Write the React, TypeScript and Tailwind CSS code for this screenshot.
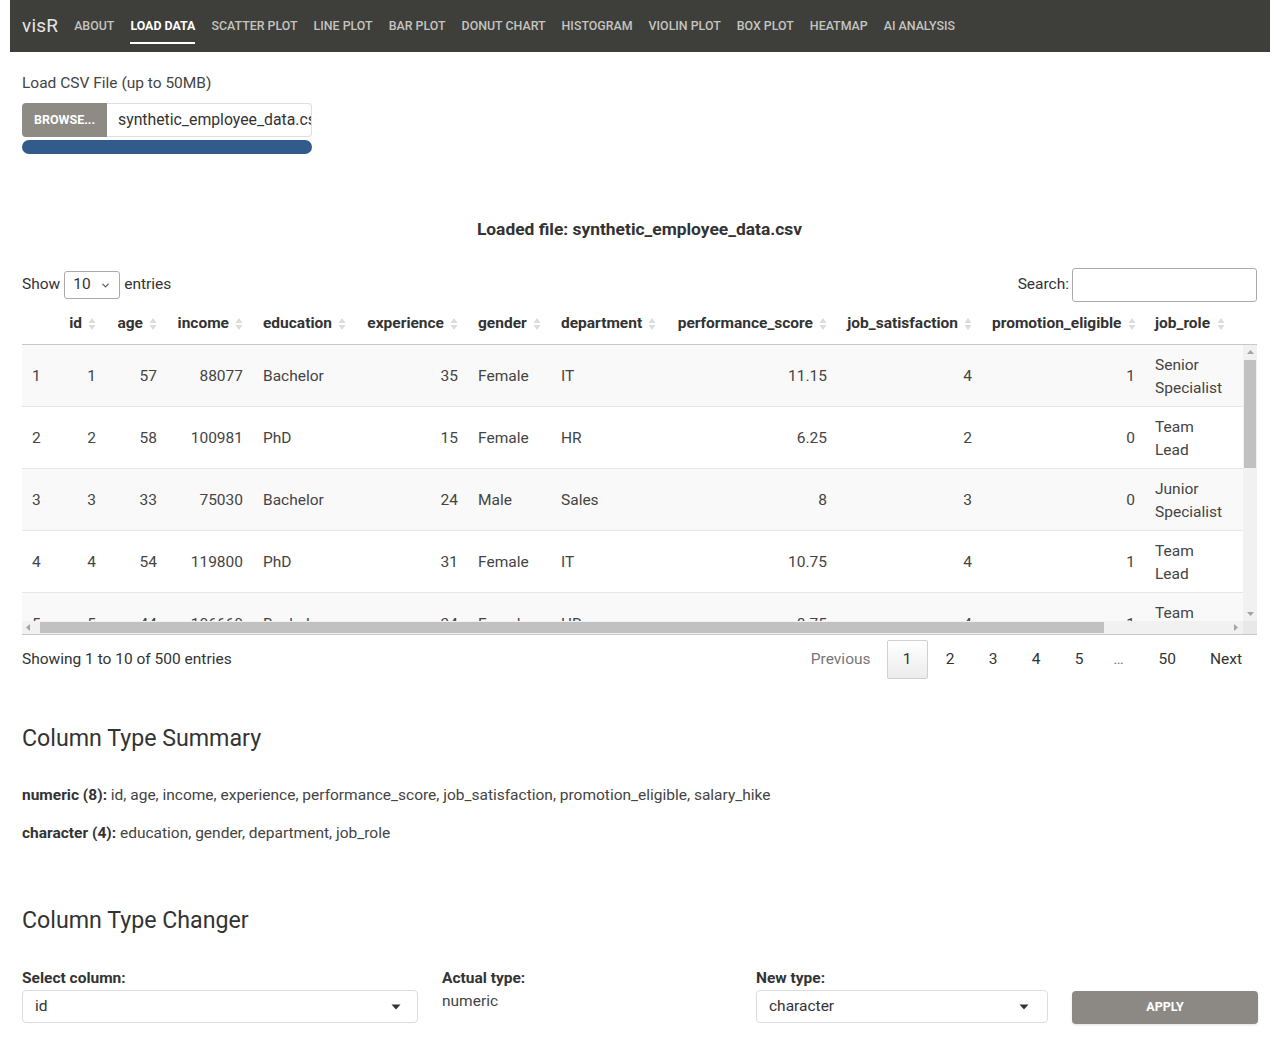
import { ChevronDown } from 'lucide-react'

type Col = { key: string; w: number; right: boolean; sort: boolean }

const cols: Col[] = [
  { key: '', w: 36, right: false, sort: false },
  { key: 'id', w: 48, right: true, sort: true },
  { key: 'age', w: 61, right: true, sort: true },
  { key: 'income', w: 86, right: true, sort: true },
  { key: 'education', w: 103, right: false, sort: true },
  { key: 'experience', w: 112, right: true, sort: true },
  { key: 'gender', w: 83, right: false, sort: true },
  { key: 'department', w: 115, right: false, sort: true },
  { key: 'performance_score', w: 171, right: true, sort: true },
  { key: 'job_satisfaction', w: 145, right: true, sort: true },
  { key: 'promotion_eligible', w: 163, right: true, sort: true },
  { key: 'job_role', w: 90, right: false, sort: true },
  { key: 'salary_hike', w: 134, right: true, sort: true },
]

const rows: (string | number)[][] = [
  [1, 1, 57, 88077, 'Bachelor', 35, 'Female', 'IT', '11.15', 4, 1, 'Senior Specialist', '12.4'],
  [2, 2, 58, 100981, 'PhD', 15, 'Female', 'HR', '6.25', 2, 0, 'Team Lead', '8.1'],
  [3, 3, 33, 75030, 'Bachelor', 24, 'Male', 'Sales', '8', 3, 0, 'Junior Specialist', '10.2'],
  [4, 4, 54, 119800, 'PhD', 31, 'Female', 'IT', '10.75', 4, 1, 'Team Lead', '14.9'],
  [5, 5, 44, 106660, 'Bachelor', 34, 'Female', 'HR', '8.75', 4, 1, 'Team Lead', '11.3'],
  [6, 6, 39, 92410, 'Master', 12, 'Male', 'Finance', '7.5', 3, 0, 'Analyst', '9.6'],
]

const tabs = ['About', 'Load Data', 'Scatter Plot', 'Line Plot', 'Bar Plot', 'Donut Chart', 'Histogram', 'Violin Plot', 'Box Plot', 'Heatmap', 'AI Analysis']

const tableW = cols.reduce((s, c) => s + c.w, 0)

function SortIcon() {
  return (
    <svg width="8" height="14" viewBox="0 0 8 14" className="shrink-0">
      <path d="M4 1 L7.5 6 H0.5 Z" fill="#dcdcdc" />
      <path d="M4 13 L0.5 8 H7.5 Z" fill="#dcdcdc" />
    </svg>
  )
}

function Caret() {
  return (
    <svg width="10" height="6" viewBox="0 0 10 6">
      <path d="M0.5 0.5 H9.5 L5 5.5 Z" fill="#333" />
    </svg>
  )
}

function ColGroup() {
  return (
    <colgroup>
      {cols.map((c, i) => (
        <col key={i} style={{ width: c.w }} />
      ))}
    </colgroup>
  )
}

function DataTable() {
  return (
    <div className="w-full">
      {/* header */}
      <div className="overflow-hidden border-b border-[#c8c8c8]">
        <table className="table-fixed border-collapse" style={{ width: tableW }}>
          <ColGroup />
          <thead>
            <tr>
              {cols.map((c, i) => (
                <th key={i} className="h-[42px] pt-[2px] pl-[10px] pr-[10px] font-bold text-[15.5px] text-[#333] whitespace-nowrap">
                  {c.sort && (
                    <div className="flex items-center gap-[6px]">
                      <span className={`flex-1 ${c.right ? 'text-right' : 'text-left'}`}>{c.key}</span>
                      <SortIcon />
                    </div>
                  )}
                </th>
              ))}
            </tr>
          </thead>
        </table>
      </div>

      {/* body + vertical scrollbar */}
      <div className="flex h-[276px]">
        <div className="flex-1 overflow-hidden">
          <table className="table-fixed border-collapse" style={{ width: tableW }}>
            <ColGroup />
            <tbody>
              {rows.map((r, ri) => (
                <tr key={ri} className={`${ri % 2 === 0 ? 'bg-[#f9f9f9]' : 'bg-white'} ${ri > 0 ? 'border-t border-[#e6e6e6]' : ''}`}>
                  {r.map((v, ci) => (
                    <td
                      key={ci}
                      className={`pt-[9px] pb-[7px] px-[10px] text-[15.5px] leading-[22.5px] text-[#444] align-middle ${cols[ci].right && ci > 0 ? 'text-right' : 'text-left'}`}
                    >
                      {v}
                    </td>
                  ))}
                </tr>
              ))}
            </tbody>
          </table>
        </div>
        <div className="w-[14px] bg-[#f1f1f1] flex flex-col items-center">
          <svg width="7" height="4" viewBox="0 0 7 4" className="mt-[5px]">
            <path d="M3.5 0 L7 4 H0 Z" fill="#a3a3a3" />
          </svg>
          <div className="w-[12px] h-[108px] bg-[#c1c1c1] mt-[6px]" />
          <div className="flex-1" />
          <svg width="7" height="4" viewBox="0 0 7 4" className="mb-[5px]">
            <path d="M3.5 4 L7 0 H0 Z" fill="#a3a3a3" />
          </svg>
        </div>
      </div>

      {/* horizontal scrollbar */}
      <div className="flex h-[14px] border-b border-[#c8c8c8]">
        <div className="flex-1 bg-[#f1f1f1] flex items-center">
          <svg width="4" height="7" viewBox="0 0 4 7" className="ml-[4px]">
            <path d="M0 3.5 L4 0 V7 Z" fill="#a3a3a3" />
          </svg>
          <div className="ml-[10px] w-[1064px] h-[11px] bg-[#c1c1c1]" />
          <div className="flex-1" />
          <svg width="4" height="7" viewBox="0 0 4 7" className="mr-[5px]">
            <path d="M4 3.5 L0 0 V7 Z" fill="#a3a3a3" />
          </svg>
        </div>
        <div className="w-[14px] bg-[#e8e8e8]" />
      </div>
    </div>
  )
}

function Pagination() {
  const btn = 'px-[14px] h-[39px] flex items-center justify-center text-[15.5px] text-[#333]'
  return (
    <div className="flex items-center">
      <span className={`${btn} text-[#777]`}>Previous</span>
      <span className={`${btn} min-w-[41px] ml-[2px] border border-[#d0d0d0] rounded-[2px] bg-gradient-to-b from-white to-[#ececec]`}>1</span>
      {['2', '3', '4', '5'].map((n) => (
        <span key={n} className={`${btn} min-w-[41px] ml-[2px]`}>
          {n}
        </span>
      ))}
      <span className="w-[34px] ml-[2px] text-center text-[15.5px] text-[#777]">…</span>
      <span className={`${btn} ml-[9px]`}>50</span>
      <span className={`${btn} ml-[6px] pr-[15px]`}>Next</span>
    </div>
  )
}

export default function App() {
  return (
    <div className="min-h-[1042px] bg-white text-[#3a3a3a]" style={{ fontFamily: 'Roboto, "Liberation Sans", sans-serif' }}>
      {/* navbar */}
      <nav className="mx-[10px] h-[52px] bg-[#3e3e3a] flex items-center pl-[12px] gap-4">
        <span className="text-[19px] text-[#e6e6e6] tracking-[0.2px]">visR</span>
        {tabs.map((t) => {
          const active = t === 'Load Data'
          return (
            <div key={t} className="relative h-[52px] flex items-center">
              <span className={`uppercase text-[12.4px] whitespace-nowrap ${active ? 'font-bold text-white' : 'font-medium text-[#c4c4c0]'}`}>{t}</span>
              {active && <div className="absolute left-0 right-0 top-[42px] h-[2px] bg-white" />}
            </div>
          )
        })}
      </nav>

      <div className="pl-[22px] pr-[23px]">
        {/* file input */}
        <div className="mt-[20px] text-[15.5px] leading-[22px] text-[#444]">Load CSV File (up to 50MB)</div>
        <div className="mt-[9px] w-[290px] flex h-[34px]">
          <div className="w-[85px] bg-[#8e8a84] rounded-l-[4px] flex items-center justify-center text-white text-[12.5px] font-bold">BROWSE...</div>
          <div className="flex-1 border border-l-0 border-[#dedede] rounded-r-[4px] flex items-center pl-[11px] overflow-hidden whitespace-nowrap text-[15.8px] text-[#333]">
            synthetic_employee_data.csv
          </div>
        </div>
        <div className="mt-[3px] w-[290px] h-[14px] rounded-full bg-[#305b8a]" />

        <div className="mt-[63px] text-center font-bold text-[17.4px] leading-[24px] text-[#333]">Loaded file: synthetic_employee_data.csv</div>

        {/* table controls */}
        <div className="mt-[27px] h-[34px] flex items-center justify-between text-[15.5px] text-[#333]">
          <div className="flex items-center">
            <span>Show</span>
            <div className="ml-[4px] mr-[4px] w-[56px] h-[28px] border border-[#aaa] rounded-[3px] flex items-center justify-between px-[8px]">
              <span>10</span>
              <ChevronDown size={11} strokeWidth={2.5} color="#555" />
            </div>
            <span>entries</span>
          </div>
          <div className="flex items-center">
            <span className="mr-[3px]">Search:</span>
            <div className="w-[185px] h-[34px] border border-[#aaa] rounded-[3px]" />
          </div>
        </div>

        <DataTable />

        {/* info + pagination */}
        <div className="mt-[5px] flex items-center justify-between">
          <span className="text-[15.5px] text-[#333]">Showing 1 to 10 of 500 entries</span>
          <Pagination />
        </div>

        {/* summary */}
        <h3 className="mt-[45px] text-[23.2px] leading-[29px] text-[#333]">Column Type Summary</h3>
        <p className="mt-[31px] text-[15.5px] leading-[22px] text-[#444]">
          <b className="text-[#333]">numeric (8):</b> id, age, income, experience, performance_score, job_satisfaction, promotion_eligible, salary_hike
        </p>
        <p className="mt-[16px] text-[15.5px] leading-[22px] text-[#444]">
          <b className="text-[#333]">character (4):</b> education, gender, department, job_role
        </p>

        <h3 className="mt-[62px] text-[23.2px] leading-[29px] text-[#333]">Column Type Changer</h3>

        <div className="mt-[32px] grid grid-cols-[396px_290px_292px_186px] gap-x-6 items-start">
          <div>
            <div className="text-[15.5px] leading-[22px] font-bold text-[#333]">Select column:</div>
            <div className="mt-[1px] h-[33px] border border-[#ddd] rounded-[4px] flex items-center justify-between pl-[12px] pr-[16px] text-[15.5px] text-[#333]">
              <span>id</span>
              <Caret />
            </div>
          </div>
          <div>
            <div className="text-[15.5px] leading-[22px] font-bold text-[#333]">Actual type:</div>
            <div className="mt-[1px] text-[15.5px] leading-[22px] text-[#444]">numeric</div>
          </div>
          <div>
            <div className="text-[15.5px] leading-[22px] font-bold text-[#333]">New type:</div>
            <div className="mt-[1px] h-[33px] border border-[#ddd] rounded-[4px] flex items-center justify-between pl-[12px] pr-[18px] text-[15.5px] text-[#333]">
              <span>character</span>
              <Caret />
            </div>
          </div>
          <div className="pt-[24px]">
            <div className="h-[33px] bg-[#8c8984] rounded-[4px] shadow-sm flex items-center justify-center text-white text-[12.5px] font-bold">APPLY</div>
          </div>
        </div>
      </div>
    </div>
  )
}
